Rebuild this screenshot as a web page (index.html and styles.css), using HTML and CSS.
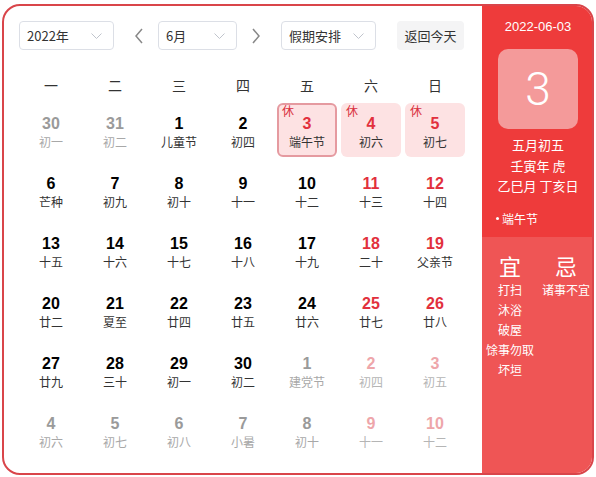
FILE: index.html
```html
<!DOCTYPE html>
<html>
<head>
<meta charset="utf-8">
<link rel="stylesheet" href="styles.css">
</head>
<body>
<div class="cal">
  <div class="main">
    <div class="head">
      <div class="sel sel-year"><span>2022年</span><svg class="dd" width="11" height="6" viewBox="0 0 11 6"><path d="M0.5 0.5 L5.5 5.5 L10.5 0.5" fill="none" stroke="#c0c4cc" stroke-width="1"/></svg></div>
      <div class="arrow arrow-l"><svg width="10" height="16" viewBox="0 0 10 16"><path d="M8 1 L2 8 L8 15" fill="none" stroke="#888" stroke-width="1.5"/></svg></div>
      <div class="sel sel-month"><span>6月</span><svg class="dd" width="11" height="6" viewBox="0 0 11 6"><path d="M0.5 0.5 L5.5 5.5 L10.5 0.5" fill="none" stroke="#c0c4cc" stroke-width="1"/></svg></div>
      <div class="arrow arrow-r"><svg width="10" height="16" viewBox="0 0 10 16"><path d="M2 1 L8 8 L2 15" fill="none" stroke="#888" stroke-width="1.5"/></svg></div>
      <div class="sel sel-hol"><span>假期安排</span><svg class="dd" width="11" height="6" viewBox="0 0 11 6"><path d="M0.5 0.5 L5.5 5.5 L10.5 0.5" fill="none" stroke="#c0c4cc" stroke-width="1"/></svg></div>
      <div class="today-btn">返回今天</div>
    </div>
    <div class="weekdays">
      <span>一</span><span>二</span><span>三</span><span>四</span><span>五</span><span>六</span><span>日</span>
    </div>
    <div class="grid">
      <div class="cell other"><b>30</b><i>初一</i></div>
      <div class="cell other"><b>31</b><i>初二</i></div>
      <div class="cell"><b>1</b><i>儿童节</i></div>
      <div class="cell"><b>2</b><i>初四</i></div>
      <div class="cell hol sel-day"><em>休</em><b>3</b><i>端午节</i></div>
      <div class="cell hol"><em>休</em><b>4</b><i>初六</i></div>
      <div class="cell hol"><em>休</em><b>5</b><i>初七</i></div>

      <div class="cell"><b>6</b><i>芒种</i></div>
      <div class="cell"><b>7</b><i>初九</i></div>
      <div class="cell"><b>8</b><i>初十</i></div>
      <div class="cell"><b>9</b><i>十一</i></div>
      <div class="cell"><b>10</b><i>十二</i></div>
      <div class="cell we"><b>11</b><i>十三</i></div>
      <div class="cell we"><b>12</b><i>十四</i></div>

      <div class="cell"><b>13</b><i>十五</i></div>
      <div class="cell"><b>14</b><i>十六</i></div>
      <div class="cell"><b>15</b><i>十七</i></div>
      <div class="cell"><b>16</b><i>十八</i></div>
      <div class="cell"><b>17</b><i>十九</i></div>
      <div class="cell we"><b>18</b><i>二十</i></div>
      <div class="cell we"><b>19</b><i>父亲节</i></div>

      <div class="cell"><b>20</b><i>廿二</i></div>
      <div class="cell"><b>21</b><i>夏至</i></div>
      <div class="cell"><b>22</b><i>廿四</i></div>
      <div class="cell"><b>23</b><i>廿五</i></div>
      <div class="cell"><b>24</b><i>廿六</i></div>
      <div class="cell we"><b>25</b><i>廿七</i></div>
      <div class="cell we"><b>26</b><i>廿八</i></div>

      <div class="cell"><b>27</b><i>廿九</i></div>
      <div class="cell"><b>28</b><i>三十</i></div>
      <div class="cell"><b>29</b><i>初一</i></div>
      <div class="cell"><b>30</b><i>初二</i></div>
      <div class="cell other"><b>1</b><i>建党节</i></div>
      <div class="cell other we"><b>2</b><i>初四</i></div>
      <div class="cell other we"><b>3</b><i>初五</i></div>

      <div class="cell other"><b>4</b><i>初六</i></div>
      <div class="cell other"><b>5</b><i>初七</i></div>
      <div class="cell other"><b>6</b><i>初八</i></div>
      <div class="cell other"><b>7</b><i>小暑</i></div>
      <div class="cell other"><b>8</b><i>初十</i></div>
      <div class="cell other we"><b>9</b><i>十一</i></div>
      <div class="cell other we"><b>10</b><i>十二</i></div>
    </div>
  </div>
  <div class="side">
    <div class="side-top">
      <div class="date">2022-06-03</div>
      <div class="big">3</div>
      <div class="lunar">五月初五</div>
      <div class="lunar">壬寅年 虎</div>
      <div class="lunar">乙巳月 丁亥日</div>
      <div class="fest"><span class="dot"></span>端午节</div>
    </div>
    <div class="side-bot">
      <div class="col">
        <div class="yj">宜</div>
        <div class="it">打扫</div>
        <div class="it">沐浴</div>
        <div class="it">破屋</div>
        <div class="it">馀事勿取</div>
        <div class="it">坏垣</div>
      </div>
      <div class="col">
        <div class="yj">忌</div>
        <div class="it">诸事不宜</div>
      </div>
    </div>
  </div>
</div>
</body>
</html>
```

FILE: styles.css
```css
* { box-sizing: border-box; }
html, body { margin: 0; padding: 0; background: #fff; }
body {
  font-family: "Liberation Sans", "Noto Sans CJK SC", sans-serif;
  color: #333;
}
.cal {
  margin: 4px 0 0 2px;
  width: 592px;
  height: 471px;
  border: 2px solid #d9454a;
  border-radius: 18px;
  overflow: hidden;
  display: flex;
  background: #fff;
}
.main {
  width: 478px;
  padding: 15px 0 0 15px;
}
.head {
  display: flex;
  align-items: center;
  height: 29px;
}
.sel {
  height: 29px;
  border: 1px solid #dcdfe6;
  border-radius: 4px;
  display: flex;
  align-items: center;
  justify-content: space-between;
  padding: 0 11px 0 7px;
  font-family: "Noto Sans CJK SC", sans-serif;
  font-size: 13px;
  color: #333;
}
.sel-year { width: 95px; }
.sel-month { width: 79px; }
.sel-hol { width: 95px; }
.dd { display: block; }
.arrow {
  width: 10px;
  height: 16px;
  display: flex;
}
.arrow-l { margin: 0 14px 0 20px; }
.arrow-r { margin: 0 20px 0 14px; }
.today-btn {
  margin-left: 21px;
  width: 67px;
  height: 29px;
  background: #f4f4f5;
  border-radius: 4px;
  font-family: "Noto Sans CJK SC", sans-serif;
  font-size: 13px;
  line-height: 29px;
  text-align: center;
  color: #333;
}
.weekdays {
  margin-top: 19px;
  display: grid;
  grid-template-columns: repeat(7, 64px);
  height: 31px;
  align-items: center;
}
.weekdays span {
  text-align: center;
  font-family: "Noto Sans CJK SC", sans-serif;
  font-size: 14px;
  color: #333;
}
.grid {
  display: grid;
  grid-template-columns: repeat(7, 64px);
  grid-auto-rows: 60px;
}
.cell {
  position: relative;
  margin: 3px 2px;
  border-radius: 6px;
  padding-top: 12px;
  text-align: center;
}
.cell b {
  display: block;
  font-weight: bold;
  font-size: 16px;
  line-height: 18px;
  color: #000;
}
.cell i {
  display: block;
  font-style: normal;
  font-family: "Noto Sans CJK SC", sans-serif;
  font-size: 12px;
  line-height: 16px;
  margin-top: 1px;
  color: #333;
}
.cell.we b { color: #e2303d; }
.cell.other b { color: #9a9a9a; }
.cell.other i { color: #a8a8a8; }
.cell.other.we b { color: #eea6aa; }
.cell.other.we i { color: #b5b5b5; }
.cell.hol { background: #fde2e3; }
.cell.hol b { color: #e2303d; }
.cell.hol em {
  position: absolute;
  left: 5px;
  top: 1px;
  font-style: normal;
  font-family: "Noto Sans CJK SC", sans-serif;
  font-size: 12px;
  line-height: 14px;
  color: #d9303d;
}
.cell.sel-day {
  border: 2px solid #e59aa0;
  padding-top: 10px;
}
.cell.sel-day em { left: 3px; top: -1px; }
.side {
  width: 112px;
  margin-right: -2px;
  margin-top: -2px;
  margin-bottom: -2px;
  display: flex;
  flex-direction: column;
  color: #fff;
  font-family: "Noto Sans CJK SC", sans-serif;
}
.side-top {
  height: 233px;
  background: #ee3b3b;
  padding-top: 15px;
  display: flex;
  flex-direction: column;
  align-items: center;
}
.date {
  font-family: "Liberation Sans", sans-serif;
  font-size: 13px;
  line-height: 16px;
}
.big {
  margin-top: 14px;
  width: 80px;
  height: 80px;
  border-radius: 10px;
  background: #f49a9a;
  font-family: Roboto, "Liberation Sans", sans-serif;
  font-weight: 300;
  font-size: 46px;
  line-height: 80px;
  text-align: center;
  color: #fff;
}
.lunar {
  font-size: 13px;
  line-height: 20.5px;
}
.big + .lunar { margin-top: 6px; }
.fest {
  align-self: flex-start;
  margin-left: 14px;
  margin-top: 14px;
  font-size: 12px;
  line-height: 16px;
  display: flex;
  align-items: center;
}
.dot {
  width: 3px;
  height: 3px;
  border-radius: 50%;
  background: #fff;
  margin-right: 3px;
}
.side-bot {
  flex: 1;
  background: #ef5555;
  display: flex;
  padding-top: 15px;
}
.col {
  width: 56px;
  display: flex;
  flex-direction: column;
  align-items: center;
}
.yj {
  font-size: 22px;
  line-height: 26px;
  margin-bottom: 2px;
}
.it {
  font-size: 12px;
  line-height: 20px;
  white-space: nowrap;
}
```
